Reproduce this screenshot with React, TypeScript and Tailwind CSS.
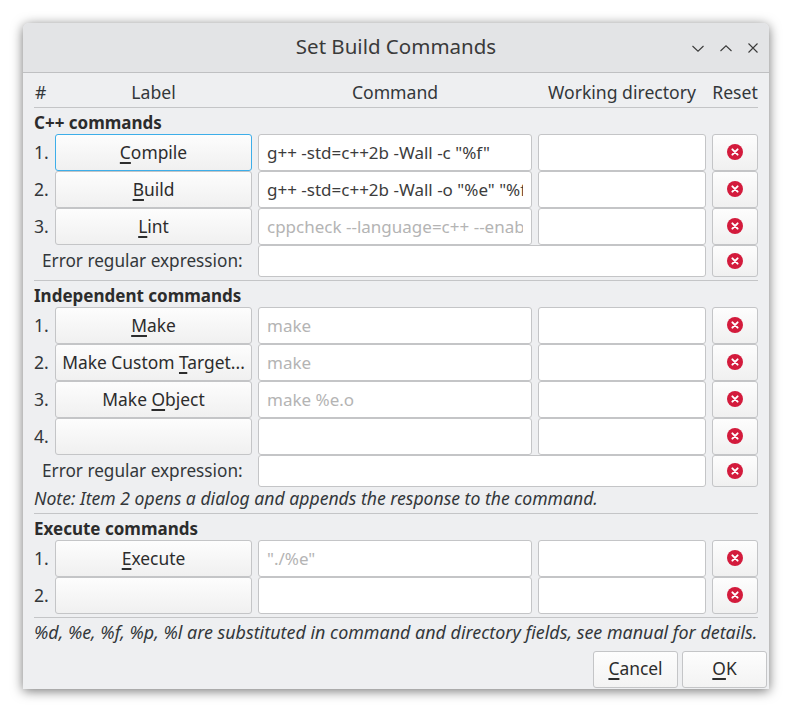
import React from 'react'

const font = "[font-family:'Noto_Sans',sans-serif]"

function Mnemonic({ text, at }: { text: string; at: number }) {
  if (at < 0) return <>{text}</>
  return (
    <>
      {text.slice(0, at)}
      <span className="underline decoration-2 underline-offset-[3px]">{text[at]}</span>
      {text.slice(at + 1)}
    </>
  )
}

function ClearIcon() {
  return (
    <svg width="16" height="16" viewBox="0 0 16 16" className="-mt-[1px]">
      <circle cx="8" cy="8" r="8" fill="#d31b3c" />
      <path d="M5.4 5.4l5.2 5.2M10.6 5.4l-5.2 5.2" stroke="#fff" strokeWidth="2" strokeLinecap="round" />
    </svg>
  )
}

function ResetButton({ short }: { short?: boolean }) {
  return (
    <button className={`flex w-[46px] items-center justify-center rounded-[3px] border border-[#c4c5c7] bg-gradient-to-b from-[#fdfdfd] to-[#f0f0f0] ${short ? 'h-[32px]' : 'h-[37px]'}`}>
      <ClearIcon />
    </button>
  )
}

function Field({ value, placeholder, className }: { value?: string; placeholder?: string; className: string }) {
  return (
    <input
      readOnly
      value={value ?? ''}
      placeholder={placeholder}
      className={`rounded-[3px] border border-[#c4c5c7] bg-white pb-[1px] pl-[8px] pr-[8px] text-[#3c3c3c] outline-none placeholder:text-[#b4b4b4] ${className}`}
    />
  )
}

type Row = { label?: string; at?: number; value?: string; placeholder?: string; focus?: boolean }

function CommandRow({ n, row }: { n: number; row: Row }) {
  return (
    <div className="flex h-[37px] items-center">
      <span className="w-[21px] text-[17.6px]">{n}.</span>
      <button
        className={`h-[37px] w-[197px] whitespace-nowrap rounded-[3px] border bg-gradient-to-b from-[#fdfdfd] to-[#f0f0f0] text-[17.4px] text-[#2c2c2c] ${row.focus ? 'border-[#3daee9]' : 'border-[#c4c5c7]'}`}
      >
        <Mnemonic text={row.label ?? ''} at={row.at ?? -1} />
      </button>
      <Field className="ml-[6px] h-[37px] w-[274px]" value={row.value} placeholder={row.placeholder} />
      <Field className="ml-[6px] h-[37px] w-[168px]" />
      <div className="ml-[6px]">
        <ResetButton />
      </div>
    </div>
  )
}

function ErrorRow() {
  return (
    <div className="flex h-[32px] items-center">
      <span className="w-[224px] whitespace-nowrap pb-[1px] pl-[8px] text-[17.2px]">Error regular expression:</span>
      <Field className="h-[32px] w-[448px]" />
      <div className="ml-[6px]">
        <ResetButton short />
      </div>
    </div>
  )
}

function Section({ title, rows }: { title: string; rows: Row[] }) {
  return (
    <>
      <div className="flex h-[26px] items-center pt-[2px] font-bold text-[#2c2c2c]">{title}</div>
      {rows.map((row, i) => (
        <CommandRow key={i} n={i + 1} row={row} />
      ))}
    </>
  )
}

function WindowButtons() {
  return (
    <div className="absolute right-[11px] top-[20px] flex items-center gap-[16px]">
      <svg width="12" height="7" viewBox="0 0 12 7" fill="none" stroke="#3a3a3a" strokeWidth="1.1">
        <path d="M.5 1l5.5 5.2L11.5 1" />
      </svg>
      <svg width="12" height="7" viewBox="0 0 12 7" fill="none" stroke="#3a3a3a" strokeWidth="1.1">
        <path d="M.5 6L6 .8 11.5 6" />
      </svg>
      <svg width="10" height="10" viewBox="0 0 10 10" fill="none" stroke="#3a3a3a" strokeWidth="1.1">
        <path d="M.5.5l9 9M9.5.5l-9 9" />
      </svg>
    </div>
  )
}

export default function App() {
  const cpp: Row[] = [
    { label: 'Compile', at: 0, value: 'g++ -std=c++2b -Wall -c "%f"', focus: true },
    { label: 'Build', at: 0, value: 'g++ -std=c++2b -Wall -o "%e" "%f"' },
    { label: 'Lint', at: 0, placeholder: 'cppcheck --language=c++ --enable=warnings' },
  ]
  const independent: Row[] = [
    { label: 'Make', at: 0, placeholder: 'make' },
    { label: 'Make Custom Target...', at: 12, placeholder: 'make' },
    { label: 'Make Object', at: 5, placeholder: 'make %e.o' },
    {},
  ]
  const execute: Row[] = [{ label: 'Execute', at: 0, placeholder: '"./%e"' }, {}]

  return (
    <div className={`h-[712px] w-[792px] bg-white pl-[23px] pt-[23px] text-[17px] leading-none text-[#33373a] ${font}`}>
      <div className="h-[666px] w-[746px] rounded-t-[6px] bg-[#eeeff1] shadow-[0_2px_12px_rgba(0,0,0,0.55)]">
        <div className="relative flex h-[50px] items-center justify-center rounded-t-[6px] border-b border-[#bfc0c2] bg-[#e3e4e6] pb-[2px] text-[20.5px] text-[#3a3a3a]">
          Set Build Commands
          <WindowButtons />
        </div>
        <div className="px-[11px]">
          <div className="flex h-[35px] items-center border-b border-[#c4c5c7] pt-[5px] text-[17.6px]">
            <span className="w-[21px] pl-[1px]">#</span>
            <span className="w-[197px] text-center">Label</span>
            <span className="ml-[6px] w-[274px] text-center">Command</span>
            <span className="ml-[6px] w-[168px] whitespace-nowrap text-center">Working directory</span>
            <span className="ml-[6px] w-[46px] text-center">Reset</span>
          </div>
          <Section title="C++ commands" rows={cpp} />
          <ErrorRow />
          <div className="mt-[3px] border-t border-[#c4c5c7]" />
          <Section title="Independent commands" rows={independent} />
          <ErrorRow />
          <div className="flex h-[26px] items-center whitespace-nowrap pb-[3px] text-[17.6px] italic">Note: Item 2 opens a dialog and appends the response to the command.</div>
          <div className="border-t border-[#c4c5c7]" />
          <Section title="Execute commands" rows={execute} />
          <div className="mt-[3px] border-t border-[#c4c5c7]" />
          <div className="flex h-[30px] items-center whitespace-nowrap text-[17.9px] italic">%d, %e, %f, %p, %l are substituted in command and directory fields, see manual for details.</div>
          <div className="-mr-[9px] mt-[3px] flex justify-end gap-[4px]">
            <button className="h-[37px] w-[85px] rounded-[3px] border border-[#c4c5c7] bg-gradient-to-b from-[#fdfdfd] to-[#f3f3f3] pb-[1px] text-[17.4px] text-[#2c2c2c]">
              <Mnemonic text="Cancel" at={0} />
            </button>
            <button className="h-[37px] w-[85px] rounded-[3px] border border-[#c4c5c7] bg-gradient-to-b from-[#fdfdfd] to-[#f3f3f3] pb-[1px] text-[17.4px] text-[#2c2c2c]">
              <Mnemonic text="OK" at={0} />
            </button>
          </div>
        </div>
      </div>
    </div>
  )
}
